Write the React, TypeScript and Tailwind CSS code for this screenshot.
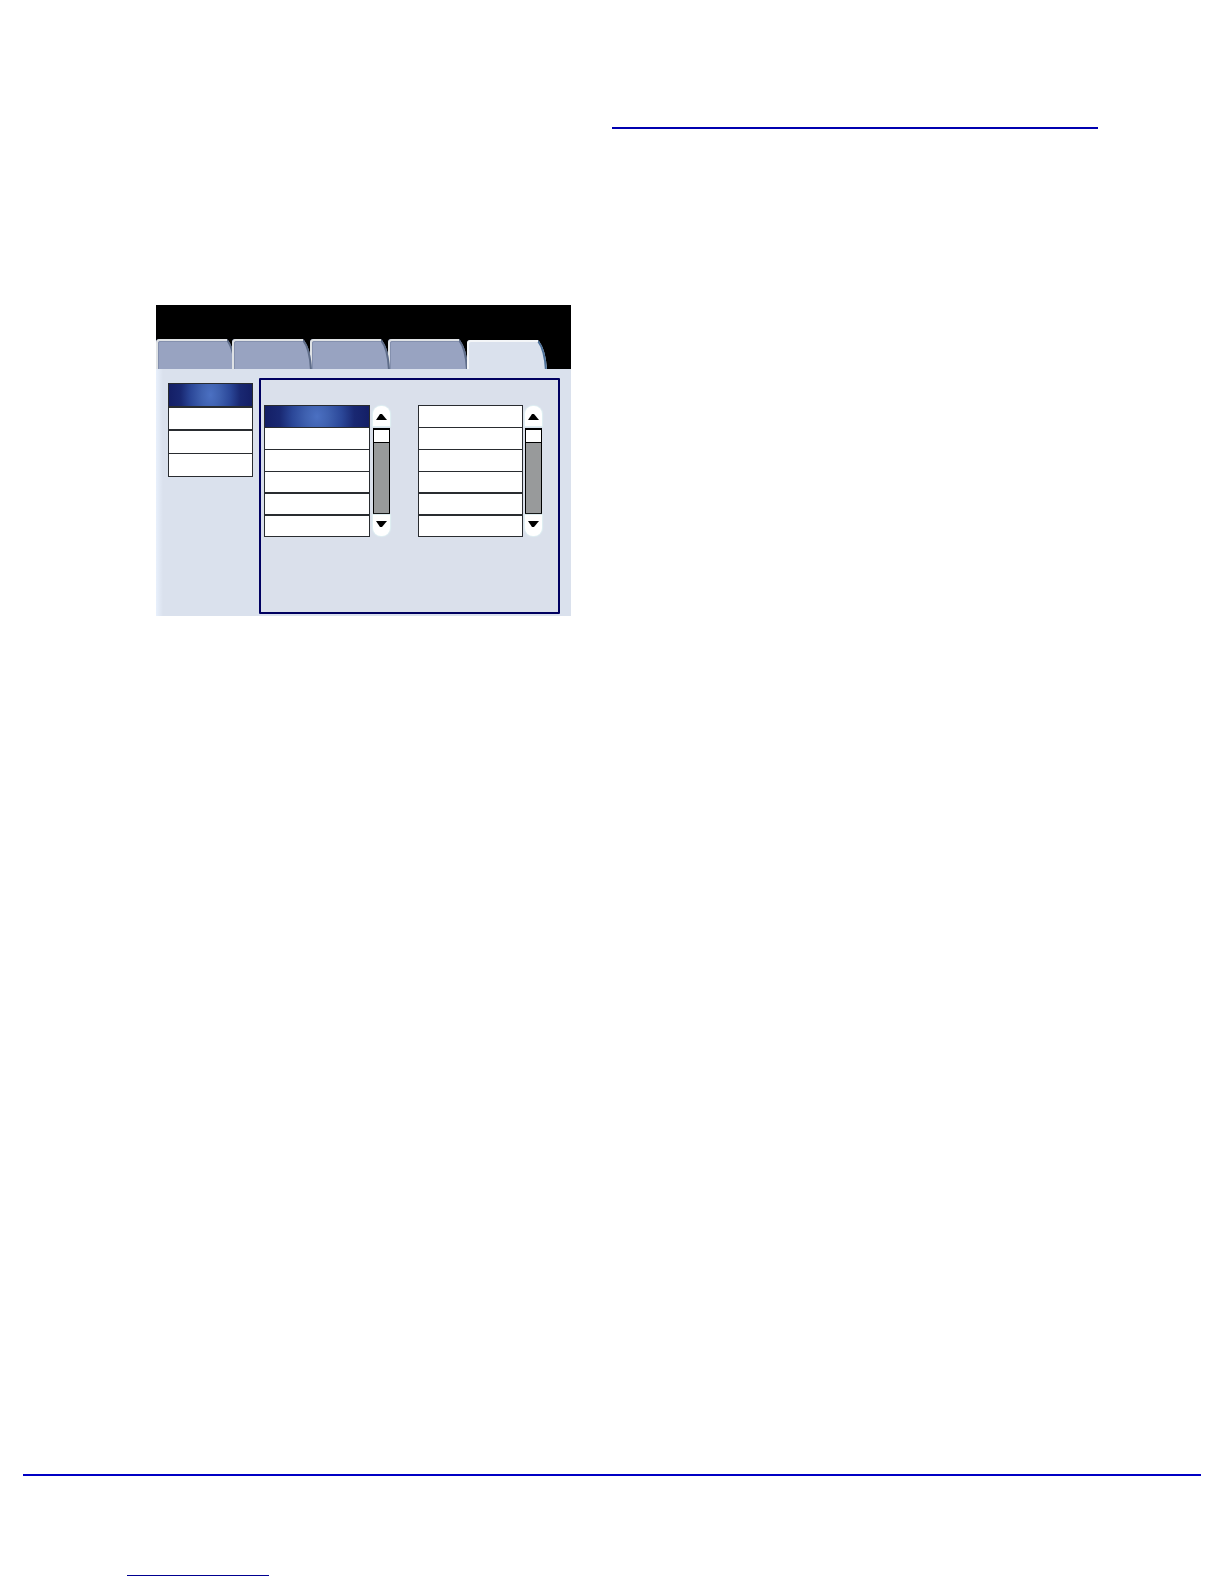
type Tab = { name: string; width: string; clip: string };

const tabs: Tab[] = [
  { name: "Tab 1", width: "w-[76px]", clip: "overflow-hidden" },
  { name: "Tab 2", width: "w-[78px]", clip: "overflow-visible z-20" },
  { name: "Tab 3", width: "w-[78px]", clip: "overflow-visible z-10" },
  { name: "Tab 4", width: "w-[79px]", clip: "overflow-visible" },
];

const menuRows = [
  "h-[23px] border-t",
  "h-[23px] border-t-2",
  "h-[24px] border-t-2",
  "h-[24px] border-y",
];

const listRows = [
  "h-[22px] border-t",
  "h-[22px] border-t",
  "h-[22px] border-t",
  "h-[21px] border-t",
  "h-[22px] border-t-2",
  "h-[23px] border-t-2 border-b",
];

function TabShape({ active = false }: { active?: boolean }) {
  return (
    <svg width="80" height="31" viewBox="0 0 80 31" className="block overflow-visible" aria-hidden="true">
      <path d="M0 31V3Q0 0 3 0H71Q79 9 80 31Z" fill={active ? "#dae1ed" : "#98a3c1"} />
      <path d="M71 1Q78 10 79 31" fill="none" stroke={active ? "#4d719a" : "#5e6c88"} strokeWidth="2" />
      <path d="M1 31V4Q1 1 4 1H71" fill="none" stroke={active ? "#f4f6f8" : "#dfe2e5"} strokeWidth="2" />
      {!active && <path d="M2.500 31V4Q2.500 2.500 4 2.500H71" fill="none" stroke="#8490ae" strokeWidth="1" />}
    </svg>
  );
}

function RowList({ name, rows, selected, className }: { name: string; rows: string[]; selected?: boolean; className: string }) {
  return (
    <div role="group" aria-label={name} className={`flex shrink-0 flex-col ${className}`}>
      {rows.map((row, i) => (
        <button
          key={i}
          type="button"
          aria-label={`${name} ${i + 1}`}
          aria-pressed={!!selected && i === 0}
          className={`block w-full border-x border-[#292c30] ${row} ${
            selected && i === 0
              ? "bg-[radial-gradient(ellipse_50%_300%_at_center,#4b70c2_0%,#3f61b0_22%,#2b4798_48%,#192872_72%,#141f66_100%)]"
              : "bg-white"
          }`}
        />
      ))}
    </div>
  );
}

function Scroller({ name }: { name: string }) {
  return (
    <div className="mt-px flex w-[17px] shrink-0 flex-col">
      <button
        type="button"
        aria-label={`${name} up`}
        className="flex h-[20px] items-start rounded-t-lg bg-white pl-[3px] pt-[8px] shadow-[0_0_1px_1px_#dff0f3]"
      >
        <svg width="11" height="6" viewBox="0 0 11 6" aria-hidden="true">
          <path d="M4 0H6L11 6H0Z" fill="#000" />
        </svg>
      </button>
      <div className="mt-[2px] h-[86px] border border-t-2 border-black bg-[#989a9b]">
        <div className="h-[13px] border-b border-black bg-white" />
      </div>
      <button
        type="button"
        aria-label={`${name} down`}
        className="mt-px flex h-[21px] items-start rounded-b-lg bg-white pl-[3px] pt-[6px] shadow-[0_0_1px_1px_#dff0f3]"
      >
        <svg width="11" height="6" viewBox="0 0 11 6" aria-hidden="true">
          <path d="M0 0H11L6 6H4Z" fill="#000" />
        </svg>
      </button>
    </div>
  );
}

export default function App() {
  return (
    <div className="flex min-h-screen flex-col bg-white font-['Liberation_Sans',sans-serif]">
      <header className="pt-[127px]">
        <hr className="ml-[50%] mr-[126px] h-[2px] border-0 bg-[#0000b0]" />
      </header>

      <main className="flex-1 px-[156px] pt-[176px]">
        <section aria-label="Settings panel" className="w-[415px] max-w-full">
          <nav aria-label="Settings tabs" className="flex bg-black pt-[34px]">
            {tabs.map((tab) => (
              <button
                key={tab.name}
                type="button"
                aria-label={tab.name}
                className={`relative h-[30px] shrink-0 ${tab.width} ${tab.clip}`}
              >
                <TabShape />
              </button>
            ))}
            <button type="button" aria-label="Tab 5" aria-current="true" className="relative h-[30px] w-[80px] shrink-0 pt-px">
              <TabShape active />
            </button>
          </nav>

          <div className="relative z-30 flex bg-[linear-gradient(to_right,#e8f0fc_0px,#dae1ed_7px)] pb-[2px] pl-[12px] pr-[11px] pt-[9px]">
            <RowList name="Menu item" rows={menuRows} selected className="mt-[5px] w-[85px]" />
            <div className="ml-[6px] flex h-[236px] flex-1 items-start rounded-[1px] border-2 border-[#000060] bg-[#dae0eb] pl-[3px] pt-[25px]">
              <RowList name="Left option" rows={listRows} selected className="w-[106px]" />
              <div className="ml-[3px] flex">
                <Scroller name="Scroll left list" />
              </div>
              <RowList name="Right option" rows={listRows} className="ml-[28px] w-[105px]" />
              <div className="ml-[2px] flex">
                <Scroller name="Scroll right list" />
              </div>
            </div>
          </div>
        </section>
      </main>

      <footer className="px-[23px] pb-[8px]">
        <hr className="h-[2px] border-0 bg-[#0000c4]" />
        <a href="#" aria-label="Website" className="ml-[104px] mt-[79px] block h-[21px] w-[142px] border-b border-[#000090]" />
      </footer>
    </div>
  );
}
